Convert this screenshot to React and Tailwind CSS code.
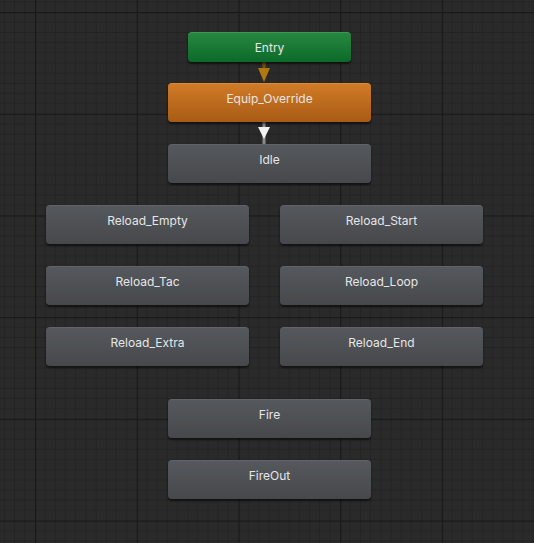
import React from 'react';

// Animator-style state machine canvas
const states = [
  { name: 'Equip_Override', x: 168, y: 83, kind: 'orange' },
  { name: 'Idle', x: 168, y: 144 },
  { name: 'Reload_Empty', x: 46, y: 205 },
  { name: 'Reload_Start', x: 280, y: 205 },
  { name: 'Reload_Tac', x: 46, y: 266 },
  { name: 'Reload_Loop', x: 280, y: 266 },
  { name: 'Reload_Extra', x: 46, y: 327 },
  { name: 'Reload_End', x: 280, y: 327 },
  { name: 'Fire', x: 168, y: 399 },
  { name: 'FireOut', x: 168, y: 460 },
];

const Grid = () => {
  const major = 101.7;
  const minor = major / 10;
  const minors = Array.from({ length: 9 }, (_, i) => (i + 1) * minor);
  return (
    <svg className="absolute inset-0" width="534" height="543">
      <defs>
        <pattern id="grid" x="35" y="12" width={major} height={major} patternUnits="userSpaceOnUse">
          {minors.map((p) => (
            <g key={p}>
              <line x1={p} y1="0" x2={p} y2={major} stroke="#232323" strokeWidth="1" />
              <line x1="0" y1={p} x2={major} y2={p} stroke="#232323" strokeWidth="1" />
            </g>
          ))}
          <line x1="0.5" y1="0" x2="0.5" y2={major} stroke="#191919" strokeWidth="1.5" />
          <line x1="0" y1="0.5" x2={major} y2="0.5" stroke="#191919" strokeWidth="1.5" />
        </pattern>
      </defs>
      <rect width="534" height="543" fill="#2a2a2a" />
      <rect width="534" height="543" fill="url(#grid)" />
    </svg>
  );
};

const StateNode = ({ name, x, y, kind }) => {
  const look =
    kind === 'orange'
      ? 'from-[#d07b26] to-[#a95b15] border-[#dc8a3a]'
      : 'from-[#55585c] to-[#46484c] border-[#606367]';
  return (
    <div
      className={`absolute w-[203px] h-[39px] rounded-[4px] border-t bg-gradient-to-b ${look} shadow-[0_2px_2px_rgba(0,0,0,0.55)] flex justify-center pt-[7px] text-[12px] leading-[16px] text-[#e6e6e6]`}
      style={{ left: x, top: y }}
    >
      {name}
    </div>
  );
};

export default function App() {
  return (
    <div className="relative w-[534px] h-[543px] overflow-hidden bg-[#2a2a2a] font-[Inter,'Noto_Sans',sans-serif]">
      <Grid />

      {/* transitions */}
      <svg className="absolute inset-0" width="534" height="543">
        <rect x="262.5" y="62" width="3" height="8" fill="#7a4f0a" />
        <polygon points="258,68 270,68 264,82" fill="#b07712" />
        <rect x="262.5" y="122" width="3" height="22" fill="#8a8a8a" />
        <polygon points="258,127 270,127 264,139" fill="#f2f2f2" />
      </svg>

      <div className="absolute left-[188px] top-[32px] w-[163px] h-[30px] rounded-[4px] border-t border-[#3a9a55] bg-gradient-to-b from-[#26873f] to-[#0c6a2a] shadow-[0_2px_2px_rgba(0,0,0,0.55)] flex items-center justify-center text-[12px] text-[#e6e6e6]">
        Entry
      </div>

      {states.map((s) => (
        <StateNode key={s.name} {...s} />
      ))}
    </div>
  );
}
